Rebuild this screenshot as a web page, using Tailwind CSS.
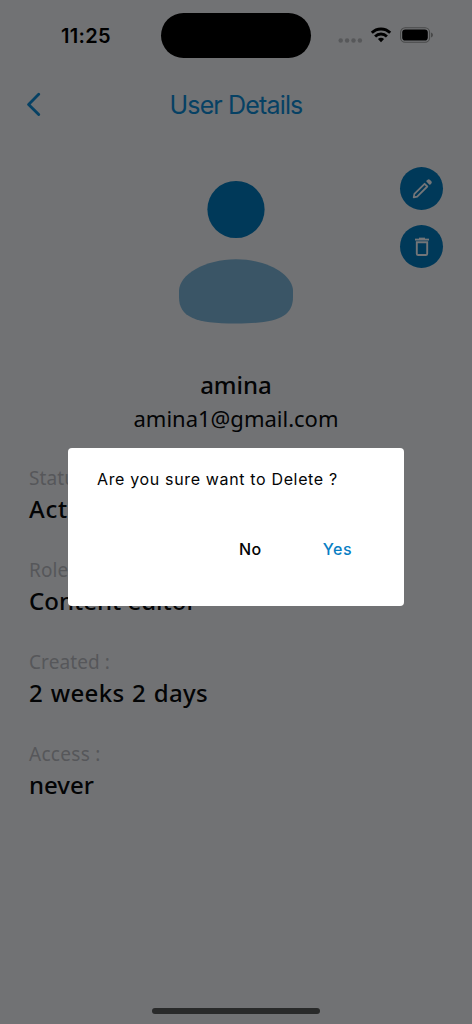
<!DOCTYPE html>
<html lang="en">
<head>
<meta charset="utf-8">
<title>User Details</title>
<script src="https://cdn.jsdelivr.net/npm/@tailwindcss/browser@4"></script>
</head>
<body class="bg-[#717274]">
<div class="relative flex h-[1024px] w-[472px] flex-col overflow-hidden bg-[#717274] font-['Noto_Sans',sans-serif] text-[#030405]">
  <header class="flex h-[70px] shrink-0 items-start font-[Inter,sans-serif] text-black">
    <div class="w-[161px] pt-[21px] pl-[61px] text-[20px] leading-[30px] font-semibold tracking-[0.3px]">11:25</div>
    <div class="mt-[13px] h-[45px] w-[150px] rounded-full bg-black"></div>
    <div class="mt-[26px] ml-[27px] flex">
      <svg class="h-[18px] w-[96px]" viewBox="0 0 96 18">
        <g fill="#57585a"><circle cx="2.7" cy="14.5" r="2.2"/><circle cx="9.1" cy="14.5" r="2.2"/><circle cx="15.5" cy="14.5" r="2.2"/><circle cx="21.9" cy="14.5" r="2.2"/></g>
        <g fill="none" stroke="#000" stroke-width="2.8"><path d="M33.8 6.8A13 13 0 0 1 52.2 6.8"/><path d="M37.1 10.5A8.2 8.2 0 0 1 48.9 10.5"/></g>
        <path d="M39.9 13.1A4.6 4.6 0 0 1 46.1 13.1L43 16.2Z" fill="#000"/>
        <rect x="62.6" y="1.7" width="29" height="14.6" rx="4.6" fill="none" stroke="#484949" stroke-width="1.1"/>
        <rect x="64.2" y="3.4" width="25.6" height="11.2" rx="3.1" fill="#000"/>
        <path d="M93 6.6Q95 7.2 95 9T93 11.4Z" fill="#484949"/>
      </svg>
    </div>
  </header>
  <nav class="grid h-[70px] shrink-0 grid-cols-[100px_272px_100px] text-[#064164]">
    <svg class="mt-[22px] ml-[26px] h-6 w-4" viewBox="0 0 16 24" fill="none" stroke="currentColor" stroke-width="2.8" stroke-linecap="round" stroke-linejoin="round"><path d="M12.7 2.3L2.6 12.5L12.7 22.6"/></svg>
    <h1 class="pt-[19px] text-center font-[Inter,sans-serif] text-[25px] leading-8 tracking-[-0.85px]">User Details</h1>
  </nav>
  <section class="grid h-[229px] shrink-0 grid-cols-[100px_272px_100px]">
    <svg class="col-start-2 mt-10 ml-[78px] h-[146px] w-[116px]" viewBox="0 0 116 146">
      <circle cx="58" cy="29.5" r="28.6" fill="#003959"/>
      <path d="M58 79.2C27 79.2 1 94.5 1 111V117C1 137 17 143.5 58 143.5C99 143.5 115 137 115 117V111C115 94.5 89 79.2 58 79.2Z" fill="#3a5566"/>
    </svg>
    <div class="flex flex-col gap-[15px] pt-[27px] pl-7">
      <button class="flex size-[43px] items-center justify-center rounded-full bg-[#003959] text-[#737578]">
        <svg class="size-6" viewBox="0 0 24 24" fill="none" stroke="currentColor" stroke-width="1.8" stroke-linejoin="round"><path d="M3.7 20.4L4.4 16.9L14.6 6.8L17.3 9.5L7.2 19.6Z"/><path d="M17.2 4.2L18.2 3.4Q18.7 3 19.2 3.4L20.7 4.9Q21.1 5.4 20.7 5.9L19.8 6.8Z" fill="currentColor"/></svg>
      </button>
      <button class="flex size-[43px] items-center justify-center rounded-full bg-[#003959] text-[#737578]">
        <svg class="size-6" viewBox="0 0 24 24" fill="none" stroke="currentColor" stroke-width="1.9"><path d="M5 4.6H19"/><path d="M9 3.6H15"/><path d="M6.8 7.3H17.2V18.7Q17.2 20 15.9 20H8.1Q6.8 20 6.8 18.7Z"/></svg>
      </button>
    </div>
  </section>
  <div class="h-[95px] shrink-0 text-center">
    <h2 class="text-[24px] leading-[32px] font-medium">amina</h2>
    <p class="mt-px text-[22px] leading-[32px]">amina1@gmail.com</p>
  </div>
  <dl class="flex flex-col pl-[29px]">
    <div class="h-[92px]"><dt class="text-[19px] leading-[28px] tracking-[0.1px] text-[#56575a]">Status :</dt><dd class="mt-px text-[24px] leading-[32px] font-medium tracking-[0.7px]">Active</dd></div>
    <div class="h-[92px]"><dt class="text-[19px] leading-[28px] tracking-[0.1px] text-[#56575a]">Role :</dt><dd class="mt-px text-[24px] leading-[32px] font-medium">Content editor</dd></div>
    <div class="h-[92px]"><dt class="text-[19px] leading-[28px] tracking-[0.1px] text-[#56575a]">Created :</dt><dd class="mt-px text-[24px] leading-[32px] font-medium tracking-[0.35px] [word-spacing:1px]">2 weeks 2 days</dd></div>
    <div class="h-[92px]"><dt class="text-[19px] leading-[28px] tracking-[0.3px] text-[#56575a]">Access :</dt><dd class="mt-px text-[24px] leading-[32px] font-medium">never</dd></div>
  </dl>
  <div class="mt-auto mb-[10px] ml-[152px] h-[6px] w-[168px] rounded-full bg-[#292a2a]"></div>
  <div role="dialog" class="absolute top-[448px] left-[68px] h-[158px] w-[336px] rounded-[4px] bg-white font-[Inter,sans-serif]">
    <p class="pt-[19px] pl-[29px] text-[16px] leading-6 tracking-[0.65px]">Are you sure want to Delete ?</p>
    <div class="mt-[46px] flex text-[16px] leading-6 font-medium tracking-[0.5px]">
      <button class="ml-[171px]">No</button>
      <button class="ml-[61px] text-[#087ec4]">Yes</button>
    </div>
  </div>
</div>
</body>
</html>
